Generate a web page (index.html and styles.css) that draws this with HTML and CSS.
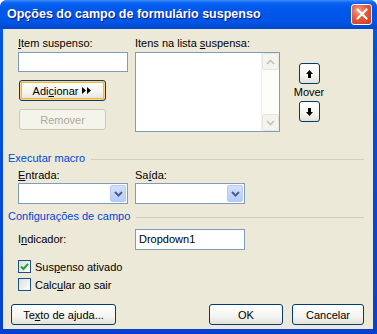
FILE: index.html
```html
<!DOCTYPE html>
<html lang="pt">
<head>
    <meta charset="UTF-8">
    <title>Opções do campo de formulário suspenso</title>
    <link rel="stylesheet" href="styles.css">
</head>
<body>
    <div class="window">
        <!-- Title bar -->
        <div class="titlebar">
            <span class="title">Opções do campo de formulário suspenso</span>
            <div class="close-btn">
                <svg width="12" height="12" viewBox="0 0 12 12"><path d="M1.5 1.5 L10.5 10.5 M10.5 1.5 L1.5 10.5" stroke="#fff" stroke-width="2.2" stroke-linecap="round"/></svg>
            </div>
        </div>

        <div class="client">
            <!-- List items section -->
            <div class="top">
                <div class="col-item">
                    <div class="label"><u>I</u>tem suspenso:</div>
                    <div class="textbox"></div>
                    <div class="btn btn-default add-btn">
                        <span>Adi<u>c</u>ionar</span>
                        <svg width="10" height="7" viewBox="0 0 10 7"><path d="M0 0 L4 3.5 L0 7 Z M5 0 L9 3.5 L5 7 Z" fill="#000"/></svg>
                    </div>
                    <div class="btn btn-disabled remove-btn">Remover</div>
                </div>
                <div class="col-list">
                    <div class="label">Itens na lista <u>s</u>uspensa:</div>
                    <div class="listbox">
                        <div class="scrollbar">
                            <div class="sb-btn">
                                <svg width="9" height="6" viewBox="0 0 9 6"><path d="M1 5 L4.5 1.5 L8 5" stroke="#c4c2b8" stroke-width="1.6" fill="none"/></svg>
                            </div>
                            <div class="sb-btn">
                                <svg width="9" height="6" viewBox="0 0 9 6"><path d="M1 1 L4.5 4.5 L8 1" stroke="#c4c2b8" stroke-width="1.6" fill="none"/></svg>
                            </div>
                        </div>
                    </div>
                </div>
                <div class="mover">
                    <div class="btn move-btn">
                        <svg width="7" height="8" viewBox="0 0 7 8"><path d="M3.5 0 L7 4 L5 4 L5 8 L2 8 L2 4 L0 4 Z" fill="#000"/></svg>
                    </div>
                    <div class="mover-label">Mover</div>
                    <div class="btn move-btn">
                        <svg width="7" height="8" viewBox="0 0 7 8"><path d="M3.5 8 L7 4 L5 4 L5 0 L2 0 L2 4 L0 4 Z" fill="#000"/></svg>
                    </div>
                </div>
            </div>

            <!-- Run macro -->
            <div class="group-title macro-title">Executar macro</div>
            <div class="macro-row">
                <div class="macro-field">
                    <div class="label"><u>E</u>ntrada:</div>
                    <div class="combo"><div class="combo-btn"><svg width="9" height="6" viewBox="0 0 9 6"><path d="M1 1 L4.5 4.5 L8 1" stroke="#4d6185" stroke-width="2" fill="none"/></svg></div></div>
                </div>
                <div class="macro-field">
                    <div class="label">Sa<u>í</u>da:</div>
                    <div class="combo"><div class="combo-btn"><svg width="9" height="6" viewBox="0 0 9 6"><path d="M1 1 L4.5 4.5 L8 1" stroke="#4d6185" stroke-width="2" fill="none"/></svg></div></div>
                </div>
            </div>

            <!-- Field settings -->
            <div class="group-title settings-title">Configurações de campo</div>
            <div class="bookmark-row">
                <div class="label bookmark-label">I<u>n</u>dicador:</div>
                <div class="textbox bookmark-box">Dropdown1</div>
            </div>
            <div class="check-row first">
                <div class="checkbox">
                    <svg width="9" height="9" viewBox="0 0 9 9"><path d="M1 4.5 L3.5 7 L8 1.8" stroke="#21a121" stroke-width="2" fill="none"/></svg>
                </div>
                <span>Sus<u>p</u>enso ativado</span>
            </div>
            <div class="check-row">
                <div class="checkbox"></div>
                <span>Calc<u>u</u>lar ao sair</span>
            </div>

            <!-- Dialog buttons -->
            <div class="footer">
                <div class="btn help-btn">Te<u>x</u>to de ajuda...</div>
                <div class="footer-right">
                    <div class="btn ok-btn">OK</div>
                    <div class="btn cancel-btn">Cancelar</div>
                </div>
            </div>
        </div>
    </div>
</body>
</html>
```

FILE: styles.css
```css
/* General */
body {
    margin: 0;
    font-family: "Liberation Sans", Arial, sans-serif;
    font-size: 11px;
    color: #000;
    background: #fff;
}
u {
    text-decoration: underline;
    text-underline-offset: 1px;
}

/* Window frame */
.window {
    width: 377px;
    height: 334px;
    box-sizing: border-box;
    border-radius: 7px 7px 0 0;
    padding: 0 4px 5px 3px;
    display: flex;
    flex-direction: column;
    background: linear-gradient(#0a5fe4, #0054e3 40px, #0841d0);
}
.titlebar {
    height: 29px;
    display: flex;
    align-items: center;
    justify-content: space-between;
    background: linear-gradient(#3d8bfd 0, #0a64f0 3px, #0058ee 8px, #0055e5 22px, #0047d0 29px);
    margin: 0 -4px 0 -3px;
    padding-left: 7px;
    padding-right: 5px;
    border-radius: 7px 7px 0 0;
}
.title {
    color: #fff;
    font-weight: bold;
    font-size: 12.5px;
    text-shadow: 1px 1px 0 #0a1883;
    margin-top: -1px;
}
.close-btn {
    width: 19px;
    height: 19px;
    border: 1px solid #fff;
    border-radius: 3px;
    background: radial-gradient(circle at 35% 30%, #f0a08a 0, #e35a3a 45%, #c63a1a 100%);
    display: flex;
    align-items: center;
    justify-content: center;
    margin-top: -1px;
}

/* Client area */
.client {
    flex: 1;
    background: #ece9d8;
    padding: 8px 9px 0 5px;
}
.label {
    height: 13px;
    line-height: 13px;
    white-space: nowrap;
}

/* Top section */
.top {
    display: flex;
    padding-left: 10px;
}
.col-item {
    width: 110px;
}
.col-list {
    width: 145px;
    margin-left: 7px;
}
.textbox {
    height: 20px;
    box-sizing: border-box;
    border: 1px solid #7f9db9;
    background: #fff;
    margin-top: 2px;
    padding: 0 4px;
    line-height: 18px;
}
.listbox {
    height: 80px;
    box-sizing: border-box;
    border: 1px solid #7f9db9;
    background: #fff;
    margin-top: 2px;
    display: flex;
    justify-content: flex-end;
}
.scrollbar {
    width: 17px;
    background: #fdfdfa;
    display: flex;
    flex-direction: column;
    justify-content: space-between;
    border-left: 1px solid #f0efe8;
}
.sb-btn {
    height: 17px;
    box-sizing: border-box;
    border: 1px solid #e8e6dc;
    border-radius: 2px;
    background: #f4f3ee;
    display: flex;
    align-items: center;
    justify-content: center;
}

/* Buttons */
.btn {
    box-sizing: border-box;
    border: 1px solid #003c74;
    border-radius: 3px;
    background: linear-gradient(#ffffff, #f4f4f0 60%, #e3e1d8);
    display: flex;
    align-items: center;
    justify-content: center;
    white-space: nowrap;
}
.btn-default {
    box-shadow: inset 0 0 0 1px #fbd58a, inset 0 0 0 2px #f8b330;
}
.btn-disabled {
    border-color: #c9c7ba;
    background: #f5f4ea;
    color: #aca899;
}
.add-btn {
    width: 87px;
    height: 21px;
    margin: 8px 0 0 1px;
    gap: 4px;
}
.remove-btn {
    width: 87px;
    height: 21px;
    margin: 8px 0 0 1px;
}
.mover {
    width: 32px;
    margin-left: 13px;
    padding-top: 26px;
    display: flex;
    flex-direction: column;
    align-items: center;
}
.move-btn {
    width: 21px;
    height: 21px;
}
.mover-label {
    height: 17px;
    line-height: 17px;
}

/* Group titles */
.group-title {
    display: flex;
    align-items: center;
    color: #0046d5;
    height: 13px;
    line-height: 13px;
    white-space: nowrap;
}
.group-title::after {
    content: "";
    flex: 1;
    border-top: 1px solid #d0d0bf;
    margin-left: 6px;
    margin-top: 1px;
}
.macro-title {
    margin-top: 20px;
}
.macro-row {
    display: flex;
    gap: 7px;
    padding-left: 10px;
    margin-top: 4px;
}
.macro-field {
    width: 110px;
}
.combo {
    height: 21px;
    box-sizing: border-box;
    border: 1px solid #7f9db9;
    background: #fff;
    margin-top: 1px;
    display: flex;
    justify-content: flex-end;
    padding: 1px;
}
.combo-btn {
    width: 16px;
    border-radius: 2px;
    background: linear-gradient(#d3e0fc, #b6cbf7);
    border: 1px solid #bacbf5;
    box-sizing: border-box;
    display: flex;
    align-items: center;
    justify-content: center;
}
.settings-title {
    margin-top: 6px;
}
.bookmark-row {
    display: flex;
    align-items: center;
    padding-left: 10px;
    margin-top: 6px;
}
.bookmark-label {
    width: 117px;
}
.bookmark-box {
    width: 110px;
    height: 21px;
    margin-top: 0;
    line-height: 19px;
    padding: 0 3px;
}
.check-row {
    display: flex;
    align-items: center;
    gap: 4px;
    padding-left: 10px;
    height: 13px;
    margin-top: 5px;
}
.check-row.first {
    margin-top: 10px;
}
.checkbox {
    width: 13px;
    height: 13px;
    box-sizing: border-box;
    border: 1px solid #1c5180;
    background: linear-gradient(135deg, #dcdcd7, #ffffff);
    display: flex;
    align-items: center;
    justify-content: center;
}

/* Footer */
.footer {
    display: flex;
    justify-content: space-between;
    padding-left: 3px;
    margin-top: 13px;
}
.footer-right {
    display: flex;
    gap: 9px;
}
.help-btn {
    width: 105px;
    height: 21px;
}
.ok-btn {
    width: 74px;
    height: 21px;
}
.cancel-btn {
    width: 72px;
    height: 21px;
}
```
